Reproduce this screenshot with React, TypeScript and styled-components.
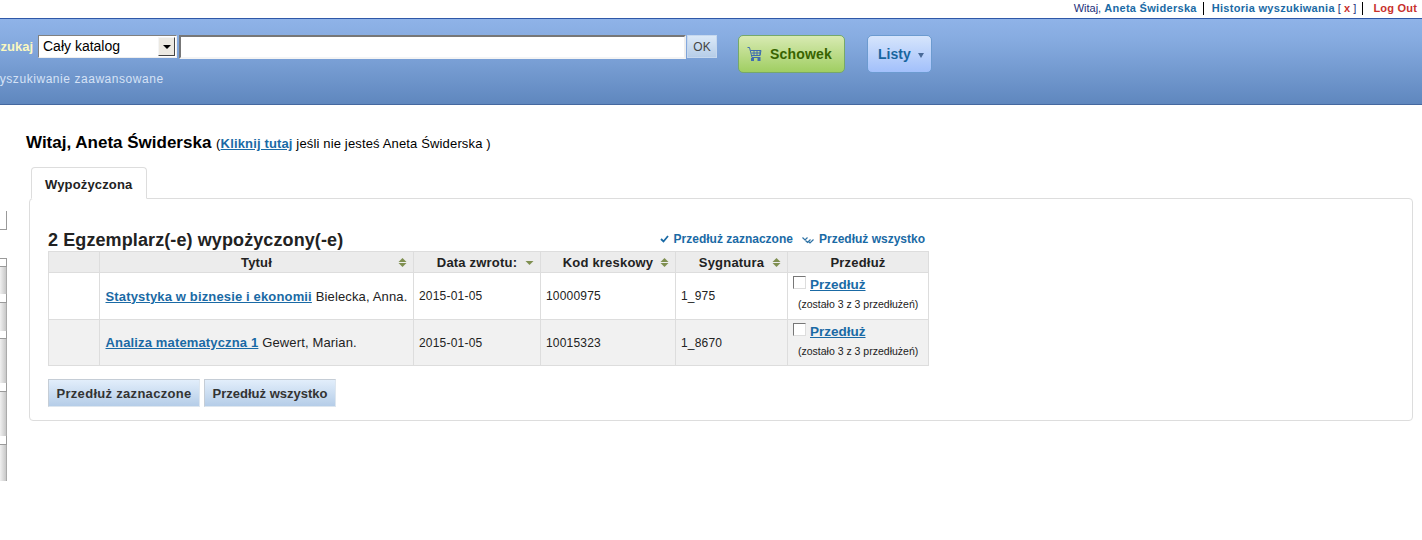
import styled, { createGlobalStyle } from 'styled-components'

const GlobalStyle = createGlobalStyle`
    html, body {
        margin: 0;
        padding: 0;
        background: #fff;
        font-family: "Liberation Sans", Arial, sans-serif;
        color: #222;
        overflow: hidden;
    }
`

const Page = styled.div`
    width: 1422px;
    height: 540px;
    overflow: hidden;
`

const TopBar = styled.div`
    height: 18px;
    display: flex;
    justify-content: flex-end;
    align-items: flex-start;
    padding: 2px 5px 0 0;
    box-sizing: border-box;
    font-size: 11px;
    line-height: 13px;
`

const TopItem = styled.div<{ $last?: boolean }>`
    padding: 0 ${p => (p.$last ? '0' : '6px')} 0 ${p => (p.$last ? '10px' : '8px')};
    border-right: ${p => (p.$last ? 'none' : '1px solid #000')};
    color: #1c2f7a;
    white-space: nowrap;
    b { color: #1a6aa5; letter-spacing: 0.3px; }
    em { color: #c8312b; font-style: normal; font-weight: bold; letter-spacing: 0.2px; }
`

const Header = styled.div`
    height: 87px;
    box-sizing: border-box;
    border-top: 1px solid #2f58a8;
    border-bottom: 1px solid #45689f;
    background: linear-gradient(180deg, #8fb3e8 0%, #86abe0 25%, #5f87be 100%);
    display: flex;
    align-items: flex-start;
    padding-top: 16px;
`

const SearchCol = styled.div`
    margin-left: -41px;
    width: 758px;
`

const SearchRow = styled.div`
    display: flex;
    align-items: flex-start;
    height: 24px;
`

const SearchLabel = styled.label`
    font-size: 13px;
    font-weight: bold;
    color: #fbf8c0;
    line-height: 23px;
    width: 74px;
    margin-right: 5px;
    flex: none;
    white-space: nowrap;
    text-align: right;
`

const SelectBox = styled.div`
    width: 139px;
    height: 23px;
    box-sizing: border-box;
    border: 1px solid;
    border-color: #808080 #eee #eee #808080;
    background: #fff;
    display: flex;
    align-items: center;
    justify-content: space-between;
    font-size: 14px;
    color: #000;
    padding: 0 1px 0 4px;
`

const SelectText = styled.span`
    padding-bottom: 2px;
`

const SelectArrow = styled.span`
    width: 17px;
    height: 19px;
    box-sizing: border-box;
    background: #ece9e2;
    border: 1px solid;
    border-color: #f5f5f5 #444 #444 #f5f5f5;
    display: flex;
    align-items: center;
    justify-content: center;
    &::after {
        content: '';
        border: 4px solid transparent;
        border-top-color: #000;
        border-bottom: 0;
    }
`

const SearchInput = styled.input`
    width: 507px;
    height: 24px;
    box-sizing: border-box;
    margin: 0 1px 0 2px;
    border: 2px solid;
    border-color: #777 #eee #f4f4f4 #777;
    background: #fff;
    outline: none;
`

const OkButton = styled.button`
    width: 30px;
    height: 23px;
    padding: 0;
    box-sizing: border-box;
    border: 1px solid #c6d8ee;
    background: linear-gradient(180deg, #dbe9f8, #b6cde8);
    color: #444;
    font: 12px "Liberation Sans", Arial, sans-serif;
`

const AdvancedLink = styled.a`
    display: block;
    margin-top: 13px;
    font-size: 12px;
    line-height: 14px;
    letter-spacing: 0.55px;
    color: #d6e2f6;
    padding-left: 29px;
`

const HeaderButton = styled.a<{ $green?: boolean }>`
    height: 38px;
    box-sizing: border-box;
    border-radius: 5px;
    display: flex;
    align-items: center;
    font-size: 14px;
    font-weight: bold;
    border: 1px solid ${p => (p.$green ? '#76a86a' : '#6c9bd0')};
    color: ${p => (p.$green ? '#376300' : '#17659f')};
    background: ${p =>
        p.$green
            ? 'linear-gradient(180deg, #d8eab2, #a0ce62)'
            : 'linear-gradient(180deg, #d6e5fc, #a2c0fb)'};
`

const CartButton = styled(HeaderButton)`
    width: 107px;
    padding-left: 8px;
    gap: 7px;
    margin-left: 21px;
    letter-spacing: 0.2px;
`

const ListButton = styled(HeaderButton)`
    width: 65px;
    padding-left: 10px;
    gap: 7px;
    margin-left: 22px;
`

const Caret = styled.span`
    width: 0;
    height: 0;
    margin-top: 2px;
    border: 3px solid transparent;
    border-top: 5px solid #4a6a98;
    border-bottom: 0;
`

const Body = styled.div`
    display: flex;
    height: 435px;
`

const SideRail = styled.div`
    width: 7px;
    flex: none;
    padding-top: 106px;
    height: 270px;
    display: flex;
    flex-direction: column;
`

const SideBlank = styled.div<{ $h: number; $gapBefore?: number }>`
    height: ${p => p.$h}px;
    margin-top: ${p => p.$gapBefore ?? 0}px;
    box-sizing: border-box;
    flex: none;
    border: solid #9a9a9a;
    border-width: ${p => (p.$gapBefore ? '1px 1px 0 0' : '0 1px 0 0')};
`

const SideFirst = styled.div`
    height: 19px;
    box-sizing: border-box;
    border: solid #9a9a9a;
    border-width: 0 1px 1px 0;
    flex: none;
`

const SideBar = styled.div<{ $h: number }>`
    height: ${p => p.$h}px;
    flex: none;
    background: linear-gradient(90deg, #f0f0f0, #c8c8c8 85%, #909090);
    border-top: 1px solid #9a9a9a;
    box-sizing: border-box;
`

const Main = styled.div`
    flex: 1;
    padding: 28px 9px 0 19px;
`

const Greeting = styled.div`
    font-size: 13px;
    letter-spacing: 0.15px;
    line-height: 20px;
    color: #000;
    strong { font-size: 17px; letter-spacing: 0; margin-right: 1px; }
`

const InlineLink = styled.a`
    color: #1a6aa5;
    font-weight: bold;
    text-decoration: underline;
`

const TabStrip = styled.div`
    display: flex;
    margin: 13px 0 0 5px;
    position: relative;
    z-index: 1;
`

const Tab = styled.div`
    width: 116px;
    height: 32px;
    box-sizing: border-box;
    margin-bottom: -1px;
    padding: 9px 0 0 13px;
    border: 1px solid #ddd;
    border-bottom: 1px solid #fff;
    border-radius: 4px 4px 0 0;
    background: #fff;
    font-size: 13px;
    letter-spacing: 0.15px;
    font-weight: bold;
    color: #222;
`

const Panel = styled.div`
    height: 223px;
    margin-left: 3px;
    box-sizing: border-box;
    border: 1px solid #ddd;
    border-radius: 4px;
    padding: 29px 18px 0;
`

const PanelHead = styled.div`
    width: 881px;
    height: 23px;
    display: flex;
    justify-content: space-between;
    align-items: flex-end;
`

const Title = styled.h3`
    margin: 0;
    font-size: 18px;
    line-height: 22px;
    font-weight: bold;
    letter-spacing: 0.1px;
    color: #222;
`

const Actions = styled.div`
    display: flex;
    gap: 9px;
    padding: 0 4px 5px 0;
    font-size: 12px;
    font-weight: bold;
    line-height: 14px;
    color: #1a6aa5;
`

const Action = styled.a`
    display: flex;
    align-items: center;
    gap: 5px;
`

const Table = styled.table`
    border-collapse: collapse;
    table-layout: fixed;
    width: 880px;
    font-size: 12px;
    color: #222;
    th, td { border: 1px solid #ddd; padding: 0; }
`

const HeadCell = styled.th`
    height: 21px;
    padding-top: 1px !important;
    box-sizing: border-box;
    background: #ececec;
    font-size: 13px;
    font-weight: bold;
    color: #222;
    position: relative;
    text-align: center;
    letter-spacing: 0.2px;
`

const SortMark = styled.svg`
    position: absolute;
    right: 6px;
    top: 6px;
`

const Row = styled.tr<{ $alt?: boolean }>`
    height: ${p => (p.$alt ? '46px' : '47px')};
    background: ${p => (p.$alt ? '#f1f1f1' : '#fff')};
`

const TextCell = styled.td`
    padding: 0 5px !important;
    letter-spacing: 0.2px;
`

const TitleCell = styled.td`
    padding: 0 0 0 5.5px !important;
    font-size: 13px;
    letter-spacing: 0.15px;
    white-space: nowrap;
`

const RenewCell = styled.td`
    padding: 0 5px !important;
    vertical-align: top;
`

const RenewLine = styled.div`
    display: flex;
    align-items: flex-start;
    gap: 4px;
    margin-top: 3px;
    a { font-size: 13.5px; line-height: 17px; }
`

const Check = styled.input`
    appearance: none;
    width: 13px;
    height: 13px;
    margin: 0;
    flex: none;
    box-sizing: border-box;
    background: #fff;
    border: 1px solid;
    border-color: #777 #ddd #ddd #777;
`

const RenewNote = styled.div`
    font-size: 10.5px;
    line-height: 12px;
    margin: 5px 0 0 5px;
    white-space: nowrap;
`

const ButtonRow = styled.div`
    display: flex;
    gap: 4px;
    margin-top: 13px;
`

const RenewButton = styled.button<{ $w: number; $track?: number }>`
    width: ${p => p.$w}px;
    height: 28px;
    box-sizing: border-box;
    padding: 0;
    border: 1px solid;
    border-color: #c5cdd6 #dde6ef #dde6ef #c5cdd6;
    background: linear-gradient(180deg, #e2eefb, #b5cde8);
    color: #333;
    font: bold 13px "Liberation Sans", Arial, sans-serif;
    letter-spacing: ${p => p.$track ?? 0}px;
    white-space: nowrap;
`

const CartIcon = () => (
    <svg width="16" height="16" viewBox="0 0 16 16" fill="none" stroke="#3f6db0" strokeWidth="1">
        <path d="M0.5 1.5h2l2.5 10h8.5" />
        <path d="M3.5 4.5h10.5l-1 5h-8.5M7 4.5v5M10 4.5v5M13 4.5v5M4.3 7h9.2" />
        <rect x="4.5" y="12.5" width="2" height="2" fill="#3f6db0" />
        <rect x="11" y="12.5" width="2" height="2" fill="#3f6db0" />
    </svg>
)

const TickIcon = () => (
    <svg width="9" height="8" viewBox="0 0 9 8" fill="none" stroke="#1a6aa5" strokeWidth="1.8">
        <path d="M1 4l2.5 2.5L8 1" />
    </svg>
)

const DoubleTickIcon = () => (
    <svg width="12" height="9" viewBox="0 0 12 9" fill="none" stroke="#2f73a5" strokeWidth="1.2">
        <path d="M0.5 2.5l2.5 2.5L5.5 2.5" />
        <path d="M3.5 5.5l2 2 3-3M6.5 6.5l1.5 1.5 3.5-3.5" />
    </svg>
)

const SortIcon = ({ down }: { down?: boolean }) => (
    <SortMark width="9" height="9" viewBox="0 0 9 9" fill="#7f8f50">
        {!down && <path d="M4.5 0l4 4h-8z" />}
        <path d={down ? 'M0.5 3h8l-4 4z' : 'M0.5 5h8l-4 4z'} />
    </SortMark>
)

const rows = [
    { link: 'Statystyka w biznesie i ekonomii', author: 'Bielecka, Anna.', code: '10000975', sig: '1_975' },
    { link: 'Analiza matematyczna 1', author: 'Gewert, Marian.', code: '10015323', sig: '1_8670' },
]

const App = () => {
    return (
        <Page>
            <GlobalStyle />
            <TopBar>
                <TopItem>Witaj, <b>Aneta Świderska</b></TopItem>
                <TopItem><b>Historia wyszukiwania</b> [ <em>x</em> ]</TopItem>
                <TopItem $last><em>Log Out</em></TopItem>
            </TopBar>

            <Header>
                <SearchCol>
                    <SearchRow>
                        <SearchLabel>Wyszukaj</SearchLabel>
                        <SelectBox><SelectText>Cały katalog</SelectText><SelectArrow /></SelectBox>
                        <SearchInput />
                        <OkButton>OK</OkButton>
                    </SearchRow>
                    <AdvancedLink>Wyszukiwanie zaawansowane</AdvancedLink>
                </SearchCol>
                <CartButton $green><CartIcon />Schowek</CartButton>
                <ListButton>Listy<Caret /></ListButton>
            </Header>

            <Body>
                <SideRail>
                    <SideFirst />
                    <SideBlank $h={8} $gapBefore={28} />
                    <SideBar $h={28} />
                    <SideBlank $h={8} />
                    <SideBar $h={29} />
                    <SideBlank $h={7} />
                    <SideBar $h={45} />
                    <SideBlank $h={8} />
                    <SideBar $h={45} />
                    <SideBlank $h={8} />
                    <SideBar $h={37} />
                </SideRail>

                <Main>
                    <Greeting>
                        <strong>Witaj, Aneta Świderska</strong> (<InlineLink>Kliknij tutaj</InlineLink> jeśli nie jesteś Aneta Świderska )
                    </Greeting>

                    <TabStrip><Tab>Wypożyczona</Tab></TabStrip>

                    <Panel>
                        <PanelHead>
                            <Title>2 Egzemplarz(-e) wypożyczony(-e)</Title>
                            <Actions>
                                <Action><TickIcon />Przedłuż zaznaczone</Action>
                                <Action><DoubleTickIcon />Przedłuż wszystko</Action>
                            </Actions>
                        </PanelHead>

                        <Table>
                            <colgroup>
                                <col width="51" />
                                <col width="314" />
                                <col width="127" />
                                <col width="135" />
                                <col width="112" />
                                <col width="141" />
                            </colgroup>
                            <thead>
                                <tr>
                                    <HeadCell />
                                    <HeadCell>Tytuł<SortIcon /></HeadCell>
                                    <HeadCell>Data zwrotu:<SortIcon down /></HeadCell>
                                    <HeadCell>Kod kreskowy<SortIcon /></HeadCell>
                                    <HeadCell>Sygnatura<SortIcon /></HeadCell>
                                    <HeadCell>Przedłuż</HeadCell>
                                </tr>
                            </thead>
                            <tbody>
                                {rows.map((row, i) => (
                                    <Row key={row.code} $alt={i === 1}>
                                        <td />
                                        <TitleCell><InlineLink>{row.link}</InlineLink> {row.author}</TitleCell>
                                        <TextCell>2015-01-05</TextCell>
                                        <TextCell>{row.code}</TextCell>
                                        <TextCell>{row.sig}</TextCell>
                                        <RenewCell>
                                            <RenewLine>
                                                <Check type="checkbox" />
                                                <InlineLink>Przedłuż</InlineLink>
                                            </RenewLine>
                                            <RenewNote>(zostało 3 z 3 przedłużeń)</RenewNote>
                                        </RenewCell>
                                    </Row>
                                ))}
                            </tbody>
                        </Table>

                        <ButtonRow>
                            <RenewButton $w={152} $track={0.3}>Przedłuż zaznaczone</RenewButton>
                            <RenewButton $w={132}>Przedłuż wszystko</RenewButton>
                        </ButtonRow>
                    </Panel>
                </Main>
            </Body>
        </Page>
    )
}

export default App
